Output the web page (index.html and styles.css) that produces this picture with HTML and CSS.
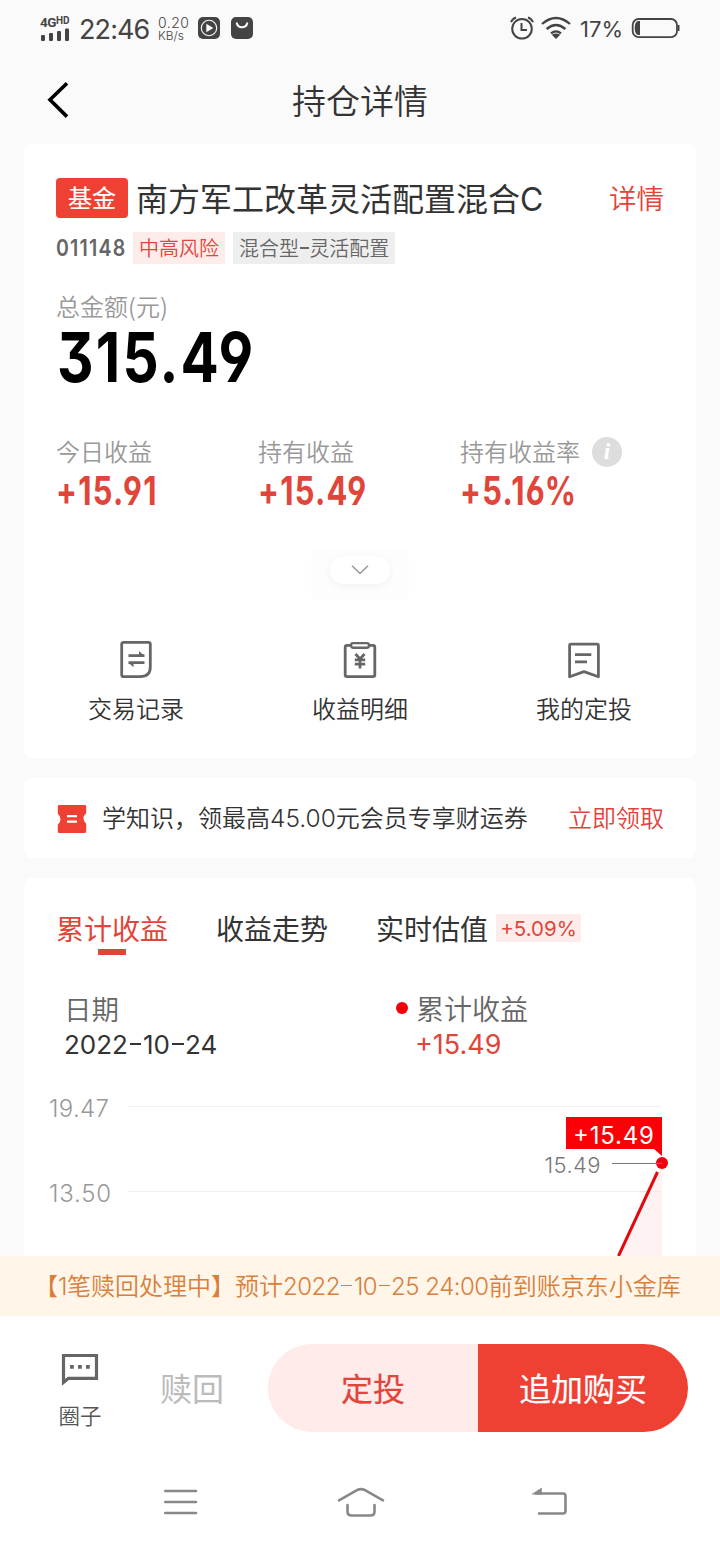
FILE: index.html
```
<!DOCTYPE html>
<html lang="zh-CN">
<head>
<meta charset="utf-8">
<title>持仓详情</title>
<link rel="stylesheet" href="styles.css">
</head>
<body>
<div class="screen">
  <header class="status">
    <div class="signal">
      <div class="net">4G<span class="hd">HD</span></div>
      <svg width="30" height="14" viewBox="0 0 30 14" fill="#444"><rect x="1" y="7" width="4" height="6" rx="1"/><rect x="9" y="5" width="4" height="8" rx="1"/><rect x="17" y="3" width="4" height="10" rx="1"/><rect x="25" y="0.500" width="4" height="12.500" rx="1"/></svg>
    </div>
    <span class="clock">22:46</span>
    <div class="speed"><span class="rate">0.20</span><span class="unit">KB/s</span></div>
    <svg class="app1" width="22" height="22" viewBox="0 0 22 22"><rect width="22" height="22" rx="5" fill="#444"/><circle cx="11" cy="11" r="7.700" fill="none" stroke="#fafafa" stroke-width="1.100"/><path d="M8.300 6.800v8.400l7-4.200z" fill="#fafafa"/></svg>
    <svg class="app2" width="22" height="22" viewBox="0 0 22 22"><rect width="22" height="22" rx="5" fill="#444"/><path d="M5.800 6.300q.8 3.900 5.200 3.900t5.200-3.900" fill="none" stroke="#fafafa" stroke-width="2" stroke-linecap="round"/></svg>
    <div class="status-right">
      <svg width="24" height="24" viewBox="0 0 24 24" fill="none" stroke="#444" stroke-width="2"><circle cx="12" cy="12.800" r="9.800"/><path d="M11.500 7v7h5.500"/><path d="M1 6.200q1.500-3.600 5-4.700M23 6.200q-1.500-3.600-5-4.700"/></svg>
      <svg class="wifi" width="30" height="24" viewBox="0 0 30 24" fill="none" stroke="#444" stroke-width="2.300"><path d="M1 8q14-12 28 0M5.600 13q9.400-8 18.800 0M10 17.400q5-4 10 0"/><path d="M10.800 18.700q4.200-2.600 8.400 0L15 23z" fill="#444" stroke="none"/></svg>
      <span class="percent">17%</span>
      <svg width="50" height="22" viewBox="0 0 50 22"><rect x="1.700" y="2" width="44.300" height="18.200" rx="6" fill="none" stroke="#444" stroke-width="1.800"/><path d="M9 4H7Q3.700 5 3.700 11T7 18h2z" fill="#444"/><path d="M47 8h1.500v6H47z" fill="#444"/></svg>
    </div>
  </header>

  <nav class="topbar">
    <svg class="back" width="24" height="40" viewBox="0 0 24 40"><path d="M22 3.300 5 19.800l17 16.800" fill="none" stroke="#000" stroke-width="3.600"/></svg>
    <h1 class="page-title">持仓详情</h1>
  </nav>

  <main class="content">
    <section class="card holding">
      <div class="fund-row">
        <span class="fund-tag">基金</span>
        <h2 class="fund-name">南方军工改革灵活配置混合<span class="lat">C</span></h2>
        <a class="detail">详情</a>
      </div>
      <div class="meta-row">
        <span class="code"><span class="din">011148</span></span>
        <span class="chip risk">中高风险</span>
        <span class="chip kind">混合型<i class="dash"></i>灵活配置</span>
      </div>
      <div class="total-label">总金额(元)</div>
      <div class="total"><span class="din">315.49</span></div>
      <div class="stats">
        <div class="stat"><div class="stat-label">今日收益</div><div class="stat-value"><span class="din">+15.91</span></div></div>
        <div class="stat"><div class="stat-label">持有收益</div><div class="stat-value"><span class="din">+15.49</span></div></div>
        <div class="stat"><div class="stat-label">持有收益率<span class="info">i</span></div><div class="stat-value"><span class="din">+5.16%</span></div></div>
      </div>
      <div class="expand-wrap"><div class="expand"><svg width="18" height="10" viewBox="0 0 18 10"><path d="m1 .8 8 7.700 8-7.700" fill="none" stroke="#999" stroke-width="1.500"/></svg></div></div>
      <div class="actions">
        <div class="action">
          <svg width="40" height="40" viewBox="0 0 40 40" fill="none" stroke="#666" stroke-width="2.800"><path d="M7.500 2.400h25q1.800 0 1.800 1.800V27q0 9.600-10 9.600H7.500q-1.800 0-1.800-1.800V4.200Q5.700 2.400 7.500 2.400Z"/><path d="M12.500 15.600h16M12.500 22.600h16" stroke-width="2.600"/><path d="M23 11v4.500h5zM17.500 27.300v-4.500h-5z" fill="#666" stroke="none"/></svg>
          <span>交易记录</span>
        </div>
        <div class="action">
          <svg width="40" height="40" viewBox="0 0 40 40" fill="none" stroke="#666" stroke-width="2.800"><path d="M10.500 5.400H7q-1.800 0-1.800 1.800v27.600q0 1.800 1.800 1.800h26q1.800 0 1.800-1.800V7.200q0-1.800-1.800-1.800h-3.500"/><rect x="11" y="3.100" width="18" height="4.600" rx="2.200" stroke-width="2.400"/><path d="m15.500 14 4.500 5 4.500-5M20 18v10.500M14.800 19.800h10.400M14.800 24.200h10.400" stroke-width="2.700"/></svg>
          <span>收益明细</span>
        </div>
        <div class="action">
          <svg width="40" height="40" viewBox="0 0 40 40" fill="none" stroke="#666" stroke-width="2.800"><path d="M7 4.200h26q1.400 0 1.400 1.400v31.200L20 31.600 5.600 36.800V5.600q0-1.400 1.400-1.400Z" stroke-linejoin="round"/><path d="M11 14.600h16.300M11 21.900h12"/></svg>
          <span>我的定投</span>
        </div>
      </div>
    </section>

    <section class="card promo">
      <svg width="32" height="32" viewBox="0 0 32 32"><path d="M3 3h26q1.200 0 1.200 1.200v7q-2.700 2-2.700 5.300t2.700 5.300v7Q30.200 31 29 31H3q-1.200 0-1.200-1.200v-7q2.700-2 2.700-5.500t-2.700-5.500V4.200Q1.800 3 3 3Z" fill="#ef4034"/><path d="M11 14.200h10M11 19.600h10" stroke="#fff" stroke-width="2.200"/></svg>
      <span class="promo-text">学知识，领最高<span class="lat">45.00</span>元会员专享财运券</span>
      <a class="promo-link">立即领取</a>
    </section>

    <section class="card chart-card">
      <div class="tabs">
        <div class="tab active">累计收益</div>
        <div class="tab">收益走势</div>
        <div class="tab">实时估值</div>
        <span class="tab-badge">+5.09%</span>
      </div>
      <div class="legend">
        <div class="legend-date"><div class="legend-label">日期</div><div class="legend-value">2022<i class="dash"></i>10<i class="dash"></i>24</div></div>
        <div class="legend-profit"><div class="legend-label"><i class="dot"></i>累计收益</div><div class="legend-value red">+15.49</div></div>
      </div>
      <svg class="chart" width="672" height="180" viewBox="24 1076 672 180">
        <path d="M128 1106.500h534M128 1191.500h534" stroke="#f0f0f0"/>
        <path d="M662 1163 618 1256h44z" fill="#fef3f2"/>
        <path d="M640 1191.500h22" stroke="#000" stroke-opacity=".04"/>
        <path d="M657.500 1172 618.500 1256" stroke="#e0090f" stroke-width="3"/>
        <g class="axis"><text x="49" y="1117" textLength="60">19.47</text><text x="49" y="1202" textLength="62">13.50</text></g>
        <path d="M566 1117h96v39l-8-7h-88z" fill="#fb0007"/>
        <text class="tip" x="573" y="1144" textLength="81">+15.49</text>
        <text class="point-label" x="544.500" y="1173" textLength="56">15.49</text>
        <circle cx="662" cy="1163" r="6" fill="#f2000a"/>
        <path d="M612 1163.500h50" stroke="#777"/>
      </svg>
    </section>
  </main>

  <footer class="footer">
    <div class="notice">【<span class="lat">1</span>笔赎回处理中】预计<span class="lat">2022<i class="dash"></i>10<i class="dash"></i>25 24:00</span>前到账京东小金库</div>
    <div class="toolbar">
      <div class="circle">
        <svg width="40" height="36" viewBox="0 0 40 36"><path d="M3.500 4.500h33v22.800H8.500l-5 4z" fill="none" stroke="#666" stroke-width="3.200"/><path d="M10 14h3.800v3.800H10zm8 0h3.800v3.800H18zm8 0h3.800v3.800H26z" fill="#666"/></svg>
        <span>圈子</span>
      </div>
      <div class="redeem">赎回</div>
      <div class="buttons"><div class="btn invest">定投</div><div class="btn buy">追加购买</div></div>
    </div>
    <div class="system-nav">
      <svg width="34" height="28" viewBox="0 0 34 28" fill="none" stroke="#888" stroke-width="2.600" stroke-linecap="round"><path d="M1.300 3h30.700M1.300 14h30.700M1.300 25h30.700"/></svg>
      <svg class="home" width="50" height="34" viewBox="0 0 50 34" fill="none" stroke="#888" stroke-width="2.600" stroke-linecap="round"><path d="M3 15.300 21 5.200q4-2.200 8 0l18 10.100"/><path d="M11.500 20V26.500q0 4 4 4h19q4 0 4-4v-6.500"/></svg>
      <svg width="36" height="32" viewBox="0 0 36 32" fill="none" stroke="#888" stroke-width="2.600" stroke-linecap="round" stroke-linejoin="round"><path d="M4 7.500h27q2.500 0 2.500 2.500v15q0 2.500-2.500 2.500H7"/><path d="M.5 8 9.500 2v6z" fill="#888" stroke-width=".6"/></svg>
    </div>
  </footer>
</div>
</body>
</html>
```
FILE: styles.css
```
* { box-sizing: border-box; }
body { margin: 0; background: #fafafa; font-family: "Noto Sans CJK SC", sans-serif; font-weight: 350; color: #333; }
h1, h2 { margin: 0; font-weight: inherit; }
svg { display: block; flex: none; }
.screen { width: 720px; height: 1544px; display: flex; flex-direction: column; overflow: hidden; white-space: nowrap; }
.lat { font-family: Inter, sans-serif; line-height: 1; }
.dash { display: inline-block; width: .46em; height: .07em; margin: 0 .06em; vertical-align: .36em; background: currentColor; }
.din { display: block; width: max-content; font-family: Inter, sans-serif; font-weight: 700; font-feature-settings: "cv03", "cv04", "cv09"; transform-origin: left center; }

.status { height: 56px; flex: none; display: flex; align-items: center; padding: 0 39px 0 40px; color: #444; font-family: Inter, sans-serif; }
.signal { width: 30px; height: 26px; display: flex; flex-direction: column; justify-content: space-between; }
.net { font: 700 13.500px/11px Roboto, sans-serif; letter-spacing: -.5px; }
.hd { font-size: 10px; letter-spacing: 0; vertical-align: 3px; }
.clock { width: 72px; margin-left: 9px; font-size: 27px; line-height: 34px; letter-spacing: -.9px; font-weight: 400; padding-top: 3px; }
.speed { width: 32px; margin-left: 7px; padding-top: 1px; display: flex; flex-direction: column; font-size: 14px; line-height: 13px; font-weight: 300; }
.rate { letter-spacing: .5px; }
.unit { font-size: 12px; }
.app1 { margin-left: 8px; }
.app2 { margin-left: 11px; }
.status-right { margin-left: auto; display: flex; align-items: center; }
.wifi { margin-left: 7px; }
.percent { width: 44px; margin-left: 9px; margin-right: 7px; padding-top: 2px; font-size: 22px; line-height: 28px; font-weight: 400; }

.topbar { height: 88px; flex: none; display: grid; grid-template-columns: 64px 1fr 64px; align-items: center; padding: 0 24px; }
.back { margin-left: 21px; }
.page-title { font-size: 34px; line-height: 44px; text-align: center; color: #333; }

.content { height: 1112px; flex: none; overflow: hidden; padding: 0 24px; display: flex; flex-direction: column; gap: 20px; }
.card { flex: none; background: #fff; border-radius: 8px; }
.holding { height: 614px; padding: 34px 32px 0; }
.fund-row { height: 40px; display: flex; align-items: center; }
.fund-tag { width: 72px; height: 40px; border-radius: 4px; background: #ef4034; color: #fff; font-size: 24px; line-height: 38px; text-align: center; font-weight: 400; -webkit-text-stroke: .2px currentColor; }
.fund-name { margin-left: 8px; padding-bottom: 2px; font-size: 32px; line-height: 38px; font-weight: 400; }
.detail { margin-left: auto; font-size: 27.500px; line-height: 38px; padding-bottom: 2px; color: #e0453a; }
.meta-row { height: 32px; margin-top: 14px; display: flex; align-items: center; }
.code { width: 77px; font-size: 23px; line-height: 30px; color: #666; }
.code .din { transform: scaleX(.85); font-weight: 600; letter-spacing: 1.400px; }
.chip { height: 32px; padding: 0 6px; font-size: 20px; line-height: 31px; }
.risk { background: #feeceb; color: #e0453a; margin-right: 8px; }
.kind { background: #eee; color: #666; }
.kind .dash { margin: 0 .03em; }
.total-label { margin-top: 24px; font-size: 24px; line-height: 36px; color: #999; }
.total { height: 65px; padding-left: 1px; font-size: 69px; line-height: 67px; color: #000; }
.total .din { transform: scaleX(.82); letter-spacing: 2.700px; }
.stats { margin-top: 44px; display: grid; grid-template-columns: 202px 202px 1fr; }
.stat-label { height: 37px; display: flex; align-items: center; font-size: 24px; line-height: 36px; padding-bottom: 1px; color: #999; }
.info { width: 30px; height: 30px; margin: 1px 0 0 12px; border-radius: 50%; background: #ddd; color: #fff; font: italic 700 23px/29px "Liberation Serif", serif; text-align: center; }
.stat-value { height: 42px; font-size: 39px; line-height: 41px; color: #e0453a; }
.stat-value .din { transform: scaleX(.79); letter-spacing: 1.600px; }
.expand-wrap { width: 98px; height: 52px; margin: 36px auto 0; padding-top: 8px; display: flex; justify-content: center; align-items: flex-start; background: #fdfdfd; border-radius: 8px; }
.expand { width: 60px; height: 28px; border-radius: 14px; background: #fff; box-shadow: 0 2px 8px rgba(0,0,0,.05); display: flex; align-items: center; justify-content: center; }
.actions { margin: 40px -32px 0; display: grid; grid-template-columns: repeat(3, 1fr); }
.action { display: flex; flex-direction: column; align-items: center; gap: 10px; font-size: 24px; line-height: 36px; }
.promo { height: 80px; padding: 0 32px; display: flex; align-items: center; font-size: 24px; line-height: 36px; }
.promo-text { margin-left: 14px; padding-bottom: 2px; }
.promo-text .lat { font-weight: 300; font-size: 24.500px; }
.promo-link { margin-left: auto; padding-bottom: 2px; color: #e0453a; }

.chart-card { height: 420px; }
.tabs { height: 82px; padding: 32px 32px 0; display: flex; align-items: flex-start; font-size: 28px; line-height: 36px; font-weight: 400; }
.tab { margin-right: 48px; }
.tab:nth-child(3) { margin-right: 8px; }
.active { color: #e0453a; display: flex; flex-direction: column; align-items: center; }
.active::after { content: ""; width: 28px; height: 6px; margin-top: 3px; background: #dc4636; }
.tab-badge { width: 85px; height: 28px; margin-top: 4px; background: #feeceb; color: #e0453a; font: 400 20.500px/29px Inter, sans-serif; text-align: center; }
.legend { height: 116px; padding: 29px 0 0 40px; display: grid; grid-template-columns: 332px 1fr; }
.legend-label { height: 38px; display: flex; align-items: center; font-size: 27.500px; line-height: 36px; padding-bottom: 1px; color: #666; }
.legend-profit .legend-label { font-size: 28px; }
.dot { width: 12px; height: 12px; margin: 1px 8px 0 0; border-radius: 50%; background: #f2000a; }
.legend-value { font: 400 26px/36px Inter, sans-serif; }
.red { font-size: 27px; line-height: 36px; color: #e0453a; padding-left: 19px; }
.chart text { font-family: Inter, sans-serif; font-weight: 300; }
.axis { font-size: 24px; fill: #999; }
.chart .tip { font-size: 24px; font-weight: 400; fill: #fff; }
.point-label { font-size: 22px; fill: #777; }

.footer { height: 288px; flex: none; background: #fff; }
.notice { height: 60px; padding-left: 34px; background: #fff5e8; color: #d97f3b; font-size: 24px; line-height: 58px; }
.notice .lat { letter-spacing: -.5px; }
.toolbar { height: 144px; display: flex; align-items: center; padding-right: 32px; }
.circle { width: 160px; padding-top: 5px; display: flex; flex-direction: column; align-items: center; gap: 13px; font-size: 21.500px; line-height: 30px; color: #555; }
.redeem { width: 108px; padding-bottom: 2px; font-size: 32px; line-height: 40px; color: #bbb; font-weight: 400; }
.buttons { width: 420px; height: 88px; flex: none; display: grid; grid-template-columns: 1fr 1fr; border-radius: 44px; overflow: hidden; }
.btn { font-size: 32px; line-height: 86px; text-align: center; font-weight: 400; -webkit-text-stroke: .2px currentColor; }
.invest { background: #feebea; color: #e0453a; }
.buy { background: #ef4034; color: #fff; }
.system-nav { height: 84px; padding: 0 152px 0 164px; display: flex; align-items: center; justify-content: space-between; }
.home { margin-right: 8px; }
```
